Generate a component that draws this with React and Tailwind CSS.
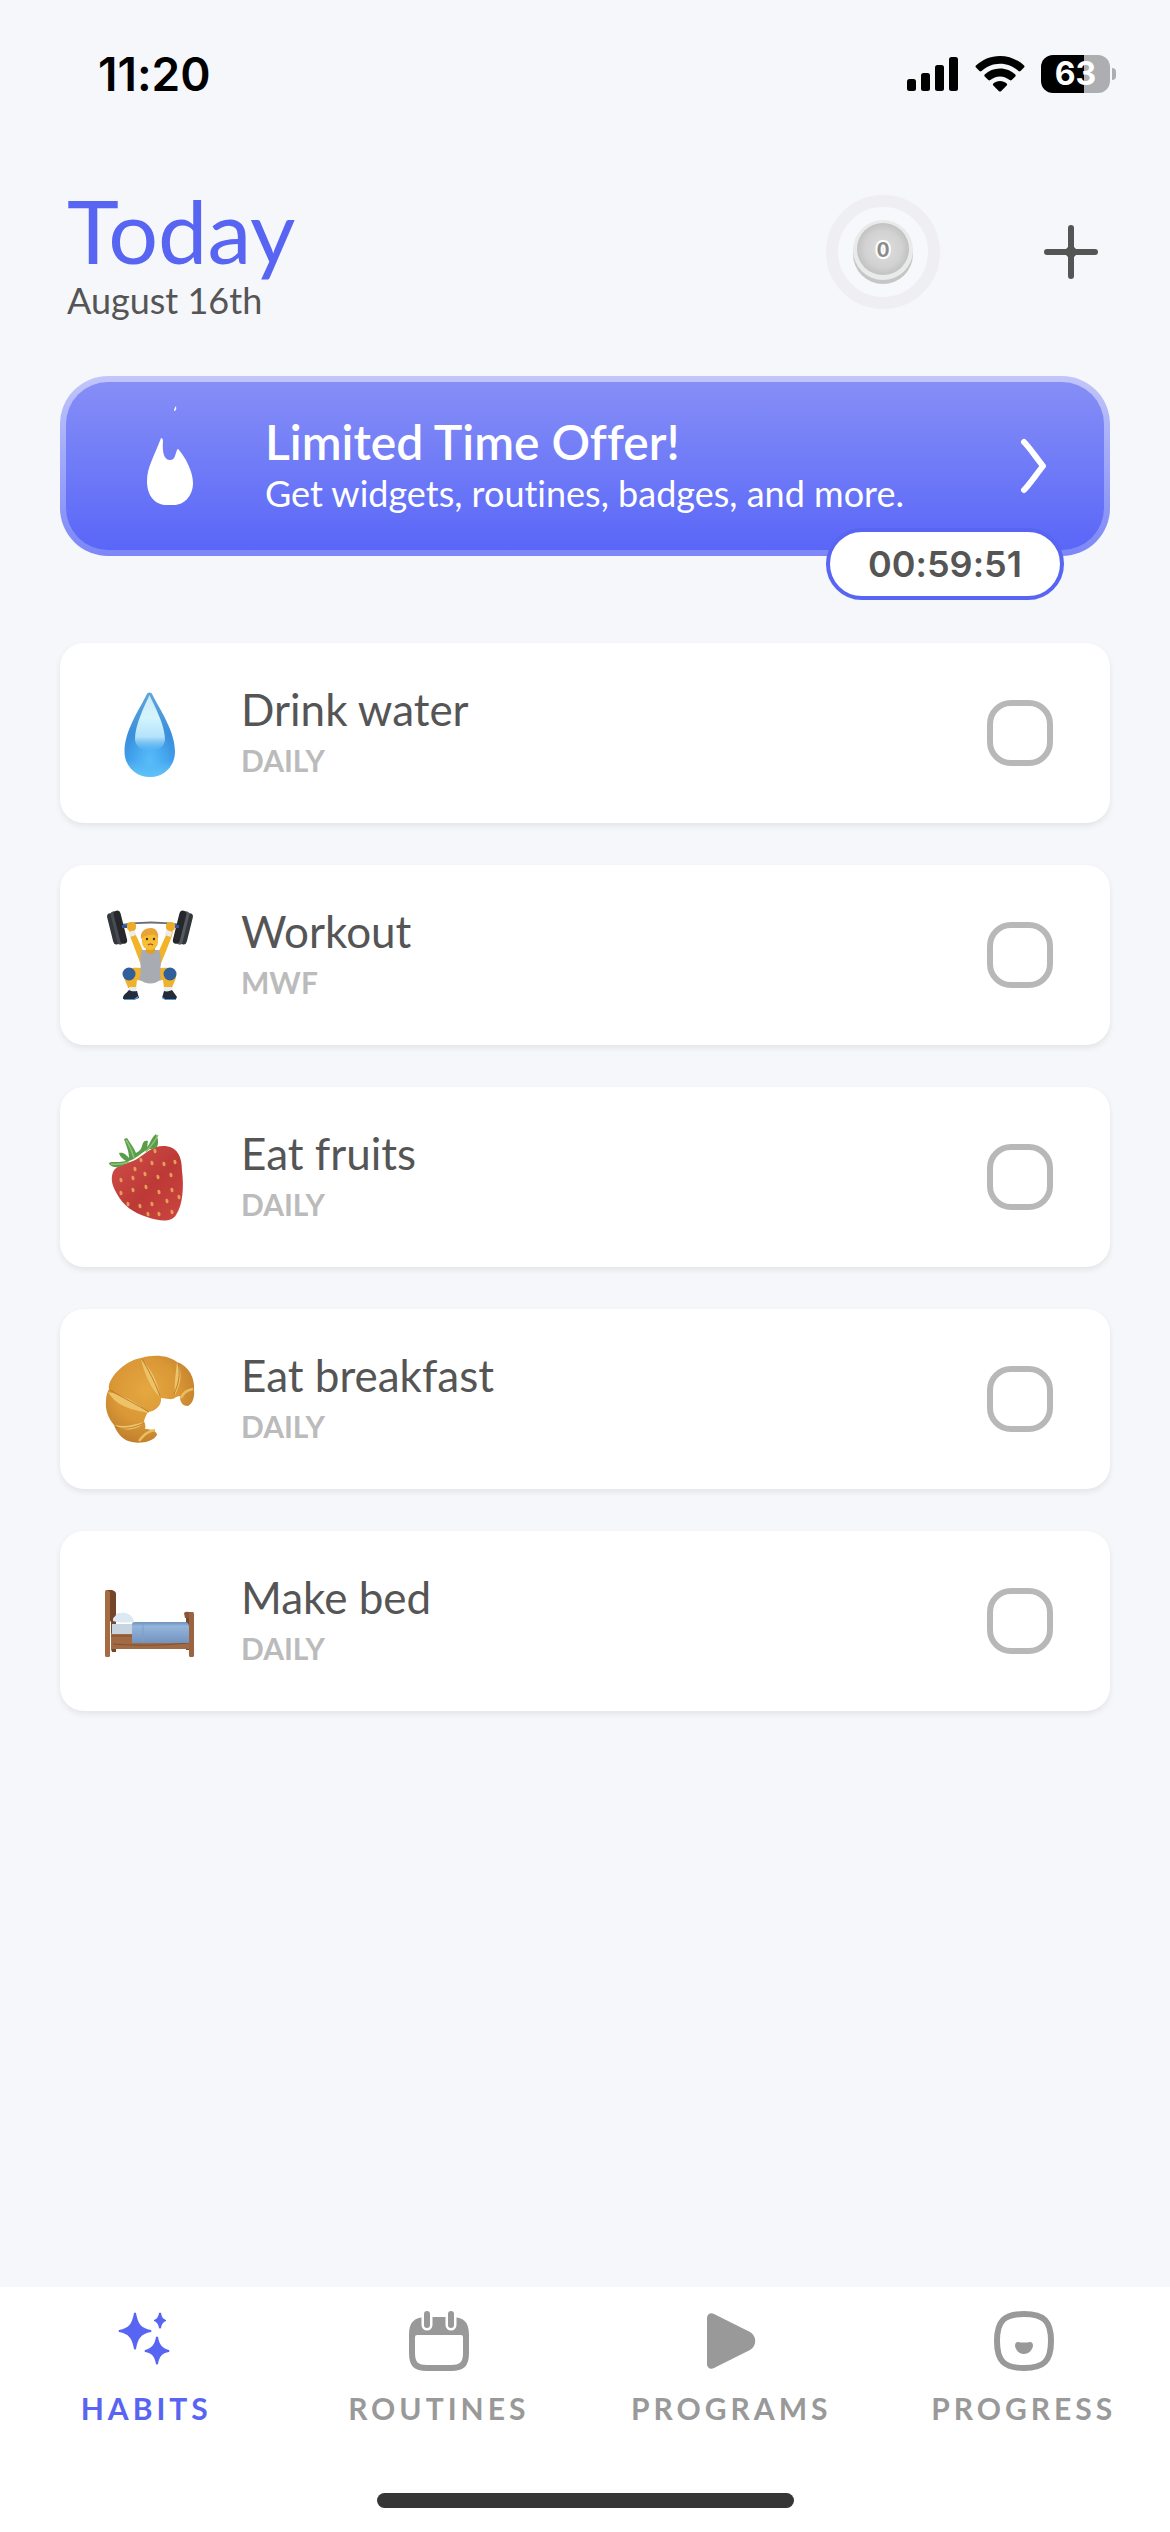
import React, { useState } from 'react';

const DropIcon = () => (
  <svg viewBox="0 3 140 120" className="w-[140px] h-[120px]" aria-hidden="true">
    <defs>
      <linearGradient id="dropBody" x1="0" y1="0" x2="0" y2="1">
        <stop offset="0" stopColor="#5fa6da" />
        <stop offset="0.5" stopColor="#3a8fda" />
        <stop offset="0.8" stopColor="#3f9dec" />
        <stop offset="1" stopColor="#6fc8f8" />
      </linearGradient>
      <linearGradient id="dropShine" x1="0" y1="0" x2="0" y2="1">
        <stop offset="0" stopColor="#cfeafa" />
        <stop offset="0.4" stopColor="#d3f5fd" />
        <stop offset="0.75" stopColor="#b4e2fb" />
        <stop offset="1" stopColor="#58b2f2" stopOpacity="0.3" />
      </linearGradient>
      <radialGradient id="dropGlow" cx="0.5" cy="0.8" r="0.45">
        <stop offset="0" stopColor="#55bdf8" />
        <stop offset="1" stopColor="#55bdf8" stopOpacity="0" />
      </radialGradient>
    </defs>
    <path d="M68.500 22.500c1.400 0 2.300.8 3 2.200C79 40 94 61 94 81.500 94 96.500 82.800 107 69 107S43.500 96.500 43.500 81.500C43.500 61 58 40 65.500 24.700c.7-1.400 1.600-2.200 3-2.200Z" fill="url(#dropBody)" />
    <path d="M68.500 22.500c1.400 0 2.300.8 3 2.200C79 40 94 61 94 81.500 94 96.500 82.800 107 69 107S43.500 96.500 43.500 81.500C43.500 61 58 40 65.500 24.700c.7-1.400 1.600-2.200 3-2.200Z" fill="url(#dropGlow)" />
    <path d="M68.500 25c5 11 15.500 30 15.500 44 0 7-6 12-15 12s-15-5-15-12c0-14 9.500-33 14.500-44Z" fill="url(#dropShine)" />
  </svg>
);

const WorkoutIcon = () => (
  <svg viewBox="0 0 120 130" className="w-[120px] h-[130px]" aria-hidden="true">
    <path d="M30 35Q60 30 90 35" fill="none" stroke="#6a6e74" strokeWidth="1.800" />
    {/* plates */}
    <g transform="rotate(-14 26 38)">
      <rect x="19" y="22" width="7" height="32" rx="3.500" fill="#33363b" />
      <rect x="23" y="21" width="6" height="34" rx="3" fill="#484c52" />
      <rect x="26" y="21" width="7" height="34" rx="3.500" fill="#25272b" />
    </g>
    <g transform="rotate(14 92 38)">
      <rect x="92" y="22" width="7" height="32" rx="3.500" fill="#33363b" />
      <rect x="89" y="21" width="6" height="34" rx="3" fill="#555a60" />
      <rect x="85" y="21" width="7" height="34" rx="3.500" fill="#25272b" />
    </g>
    <rect x="31" y="35" width="5" height="3" fill="#2c5aa8" />
    <rect x="84" y="35" width="4" height="3" fill="#2c5aa8" />
    {/* arms */}
    <path d="m38 40 6 3 9 20 5 6-8 6L39 46ZM82 40l-6 3-9 20-6 6 8 7 12-30Z" fill="#f2b329" />
    <path d="m38 42 6-2 1 5-6 2ZM75 40l6 2-1 5-6-2Z" fill="#e9edf2" />
    <rect x="36" y="32" width="9" height="9" rx="4" fill="#eeab28" />
    <rect x="75" y="32" width="9" height="9" rx="4" fill="#eeab28" />
    {/* legs */}
    <path d="M54 79c-8-2-19-2-21 5-1 5 3 9 4 14h8l1-8 12 2ZM65 79c8-2 18-2 20 5 1 5-3 9-4 14h-8l-1-8-12 2Z" fill="#f0b12d" />
    <circle cx="38" cy="84" r="6.500" fill="#315f9c" />
    <circle cx="79" cy="84" r="6.500" fill="#315f9c" />
    <path d="M38 97h8l-1 5h-7ZM73 97h8l-1 5h-7Z" fill="#e8edf3" />
    <path d="M38 100c3 2 6 1 8 1l2 7c-5 2-11 2-16 1 0-5 3-5 6-9ZM73 101c3 1 6 0 8-1l5 7-1 2c-5 1-10 1-14-1Z" fill="#252c37" />
    <path d="M33 109h10l4-3v2l-3 2H33ZM71 106l3 3h11v1H74l-3-2Z" fill="#4a9be0" />
    {/* singlet */}
    <path d="M51 60h4q4 5 9 0h4c4 8 0 19 2 29-6 6-15 6-22 0 4-10-1-21 3-29Z" fill="#a9abb2" />
    <path d="M55 56h9v6q-4 4-9 0Z" fill="#dfa024" />
    <rect x="51" y="40" width="16" height="20" rx="8" fill="#f7bd35" />
    <path d="M50 49c-1-7 3-11 10-11 5 0 8 4 7 11-2-3-3-5-7-4-4 0-7 1-10 4Z" fill="#e8a435" />
    <circle cx="56" cy="49" r="1.200" fill="#4b3312" />
    <circle cx="63" cy="49" r="1.200" fill="#4b3312" />
    <path d="M57 55q2-2 5 0" fill="none" stroke="#8d4f16" strokeWidth="1.200" />
  </svg>
);

const seeds = [
  [64, 31], [50, 40], [44, 49], [61, 43], [73, 44], [84, 42], [30, 60], [42, 58], [54, 54], [67, 57],
  [80, 55], [30, 73], [42, 70], [55, 67], [68, 72], [81, 70], [37, 84], [49, 86], [61, 84], [76, 81],
  [88, 77], [57, 94], [68, 94], [81, 92],
];

const StrawberryIcon = () => (
  <svg viewBox="0 -3 120 120" className="w-[120px] h-[120px]" aria-hidden="true">
    <defs>
      <linearGradient id="berry" x1="0" y1="0" x2="1" y2="1">
        <stop offset="0" stopColor="#d1504a" />
        <stop offset="0.55" stopColor="#bd3936" />
        <stop offset="1" stopColor="#cd4640" />
      </linearGradient>
    </defs>
    <path d="M22 52c4-8 15-8 24-13 9-6 16-13 26-13 14 0 19 10 19 25 2 15 1 34-6 44-5 8-17 6-29 2-14-4-24-12-30-23-4-7-7-14-4-22Z" fill="url(#berry)" />
    {seeds.map(([x, y]) => (
      <ellipse key={`${x}-${y}`} cx={x} cy={y} rx="1.500" ry="2.300" fill="#e0a05a" transform={`rotate(-15 ${x} ${y})`} />
    ))}
    <path d="m33 19 3-1c4 6 7 10 9 15 3-2 5-3 6-7 1-5 3-6 6-5-1 3 0 5-1 7 3-5 5-11 9-14 2 4 3 9 1 13-4 3-8 1-12 4-6 4-10 8-16 10-7 6-14 9-20 3 0-2 2-2 5-2 4 0 8 0 12-1-3-2-6-4-7-8 5-1 7 2 10 5 0-7-3-13-5-19Z" fill="#5a9c49" />
    <path d="M35 20c4 6 6 11 8 18M67 15c-4 8-8 12-12 17M20 44c7 1 12 0 18-2" fill="none" stroke="#8ac774" strokeWidth="1.500" />
  </svg>
);

const CroissantIcon = () => (
  <svg viewBox="0 0 120 120" className="w-[120px] h-[120px]" aria-hidden="true">
    <defs>
      <radialGradient id="crust" cx="0.45" cy="0.4" r="0.6">
        <stop offset="0" stopColor="#e5a840" />
        <stop offset="0.6" stopColor="#da9836" />
        <stop offset="1" stopColor="#c2802e" />
      </radialGradient>
    </defs>
    <path d="M18 50c-2-9 14-28 32-31 13-4 27-3 36 4 12 4 18 16 17 28 1 8-2 14-6 16-5 0-8-3-8-10-4 0-6 4-11 3-3 0-5-1-8-1 1 7-5 13-13 14-2 3-3 6-4 9 1 3 2 5 1 8 6 0 12 2 12 6-4 7-17 9-25 7-8-1-15-8-18-17-6-7-9-16-8-24 0-5 1-8 3-12Z" fill="url(#crust)" />
    <path d="M50 20c10 10 17 22 19 38-9-8-16-24-19-38ZM86 23c6 10 4 22-2 33-1-11 1-23 2-33ZM17 53c14 3 29 10 41 21-16-3-32-6-41-21ZM24 86c11 3 20-1 30-3-8 9-23 10-30 3Z" fill="#eec368" />
    <path d="M102 50c-7 1-10 4-12 9M64 91c-8 1-12 6-16 11" fill="none" stroke="#ebbd5e" strokeWidth="2.500" />
    <path d="M51 20c7 12 13 23 18 37M19 51c15 9 26 14 39 22M24 88c10 3 22 0 29-4M87 24c3 12 0 22-4 31" fill="none" stroke="#ae7023" strokeWidth="0.800" />
  </svg>
);

const BedIcon = () => (
  <svg viewBox="0 -4 120 110" className="w-[120px] h-[110px]" aria-hidden="true">
    <defs>
      <linearGradient id="quilt" x1="0" y1="0" x2="0" y2="1">
        <stop offset="0" stopColor="#6f91ba" />
        <stop offset="0.2" stopColor="#94b5dc" />
        <stop offset="1" stopColor="#7194bf" />
      </linearGradient>
    </defs>
    <path d="M20 21c3-1 5 1 5 3v54h-5ZM95 44c3-2 5-2 5 0v36h-5Z" fill="#744a30" />
    <path d="M20 63h78v16H20Z" fill="#a06a45" />
    <path d="M20 66h78M22 74q35 3 76-1" fill="none" stroke="#83512f" strokeWidth="1" />
    <path d="M21 54h22v10H21Z" fill="#c8d4df" />
    <path d="M22 46c6-5 18-5 21 5 0 2-14 2-21 0Z" fill="#dce8f3" />
    <path d="M41 54q0-2 3-2h51q3 1 3 5v16H41Z" fill="url(#quilt)" />
    <path d="M52 53v19" stroke="#7d9fc7" strokeWidth="1" />
    <rect x="14" y="20" width="5" height="67" rx="1.500" fill="#a56b43" />
    <path d="M16 20h5c3 1 4 3 4 5v20l-6 7V22ZM20 79h5v3h-4Z" fill="#744528" />
    <path d="M93 43q2-2 5-1h4v6h-8Z" fill="#8a5635" />
    <rect x="98" y="42" width="5" height="45" rx="1.500" fill="#9b6340" />
  </svg>
);

const FlameIcon = () => (
  <svg viewBox="0 0 60 120" className="w-[60px] h-[120px]" fill="currentColor" aria-hidden="true">
    <path d="M35 0q1 3-1 5h-1q0-3 2-5ZM20 32c1 0 2 1 2 3-1 11 1 19 7 19 5 0 5-5 7-10q1-2 2 0c6 7 14 21 14 33 0 13-9 22-19 22h-7C15 99 6 91 6 75c0-14 7-24 14-43Z" />
  </svg>
);

const HabitsIcon = () => (
  <svg viewBox="4 1 60 60" className="w-[60px] h-[60px]" fill="currentColor" aria-hidden="true">
    <path d="M22 3q1-1 2 0c2 11 5 15 15 17q1 1 0 2c-10 2-13 6-15 17q-1 1-2 0c-2-11-5-15-15-17q-1-1 0-2C17 18 20 14 22 3ZM44 27q1-1 2 0c1.500 8 4 11 11 13q1 1 0 2c-7 1-9.500 4-11 12q-1 1-2 0c-1.500-8-4-11-11-12q-1-1 0-2c7-2 9.500-5 11-13ZM47 3q1-1 2 0c.8 4 2 6 5 7v1c-3 1-4.200 3-5 7q-1 1-2 0c-.8-4-2-6-5-7v-1c3-1 4.200-3 5-7Z" />
  </svg>
);

const RoutinesIcon = () => (
  <svg viewBox="0 0 60 60" className="w-[60px] h-[60px]" aria-hidden="true">
    <path
      d="M18 6h24c13 0 18 5 18 18v18c0 13-5 18-18 18H18C5 60 0 55 0 42V24C0 11 5 6 18 6ZM8 24q-2 0-2 2v16c0 9 3 12 12 12h24c9 0 12-3 12-12V26q0-2-2-2Z"
      fill="currentColor"
      fillRule="evenodd"
    />
    <path d="M18 3v11M42 3v11" stroke="white" strokeWidth="11" strokeLinecap="round" />
    <path d="M18 3v11M42 3v11" stroke="currentColor" strokeWidth="6" strokeLinecap="round" />
  </svg>
);

const ProgramsIcon = () => (
  <svg viewBox="0 0 60 60" className="w-[60px] h-[60px]" fill="currentColor" aria-hidden="true">
    <path d="M6 7c0-4 4-6 7-4l36 18c7 4 7 14 0 18L13 57c-3 2-7 0-7-4Z" />
  </svg>
);

const ProgressIcon = () => (
  <svg viewBox="0 0 60 60" className="w-[60px] h-[60px]" aria-hidden="true">
    <path d="M30 3C50 3 57 10 57 30S50 57 30 57 3 50 3 30 10 3 30 3Z" fill="none" stroke="currentColor" strokeWidth="6" />
    <path d="M24 31q6 1 12 0 3 0 3 4c-1 5-5 8-9 8s-8-3-9-8q0-4 3-4Z" fill="currentColor" />
  </svg>
);

const habits = [
  { id: 'water', name: 'Drink water', schedule: 'Daily', icon: DropIcon },
  { id: 'workout', name: 'Workout', schedule: 'MWF', icon: WorkoutIcon },
  { id: 'fruits', name: 'Eat fruits', schedule: 'Daily', icon: StrawberryIcon },
  { id: 'breakfast', name: 'Eat breakfast', schedule: 'Daily', icon: CroissantIcon },
  { id: 'bed', name: 'Make bed', schedule: 'Daily', icon: BedIcon },
];

const tabs = [
  { label: 'Habits', icon: HabitsIcon },
  { label: 'Routines', icon: RoutinesIcon },
  { label: 'Programs', icon: ProgramsIcon },
  { label: 'Progress', icon: ProgressIcon },
];

const StatusBar = () => (
  <div className="flex items-center justify-between h-[148px] pl-[98px] pr-[54px] font-['Inter',sans-serif] text-black">
    <span className="text-[46px] font-semibold">11:20</span>
    <div className="flex items-center gap-4">
      <svg viewBox="0 0 52 36" className="w-[52px] h-9" aria-hidden="true">
        <rect x="0" y="23" width="9" height="12" rx="2.500" />
        <rect x="14" y="17" width="9" height="18" rx="2.500" />
        <rect x="28" y="9" width="9" height="26" rx="2.500" />
        <rect x="42" y="1" width="9" height="34" rx="2.500" />
      </svg>
      <svg viewBox="0 0 50 36" className="w-[50px] h-9" aria-hidden="true">
        <path d="M25 0C34.500 0 43 3.800 49 9.600q1 1 0 2l-3.500 3.500q-1 .8-2 0C38.500 10.500 32 7.800 25 7.800S11.500 10.500 6.500 15.100q-1 .8-2 0L1 11.600q-1-1 0-2C7 3.800 15.500 0 25 0Z" />
        <path d="M25 12.500c6 0 11.300 2.300 15.300 6q1 1 0 2l-3.600 3.600q-1 .8-2 0c-2.600-2.300-6-3.700-9.700-3.700s-7.100 1.400-9.700 3.700q-1 .8-2 0l-3.600-3.600q-1-1 0-2c4-3.700 9.300-6 15.300-6Z" />
        <path d="M25 25c2.600 0 5 .9 6.700 2.400q1 1 0 2l-5.700 5.800q-1 .8-2 0l-5.700-5.800q-1-1 0-2C20 25.900 22.400 25 25 25Z" />
      </svg>
      <div className="flex items-center gap-[2px]">
        <div className="flex items-center justify-center w-[69px] h-[38px] rounded-xl bg-[linear-gradient(to_right,#000_62%,#adaeb1_62%)] text-white text-[32px] leading-none font-bold">
          63
        </div>
        <div className="w-1 h-3 rounded-r-full bg-[#adaeb1]" />
      </div>
    </div>
  </div>
);

const Header = () => (
  <header className="flex items-start justify-between pl-[67px] pr-[60px]">
    <div className="pt-9">
      <h1 className="text-[88px] leading-[92px] text-[#5865f2]">Today</h1>
      <p className="text-[36px] leading-[48px] text-[#555]">August 16th</p>
    </div>
    <div className="flex items-center gap-[92px] pt-[47px]">
      <button type="button" aria-label="Streak: 0 days">
        <svg viewBox="0 0 114 114" className="w-[114px] h-[114px]" aria-hidden="true">
          <defs>
            <radialGradient id="coin" cx="0.5" cy="0.5" r="0.5">
              <stop offset="0" stopColor="#dedede" />
              <stop offset="0.7" stopColor="#d2d2d2" />
              <stop offset="1" stopColor="#c2c2c2" />
            </radialGradient>
          </defs>
          <circle cx="57" cy="57" r="51" fill="#f7f8fc" stroke="#eeeef3" strokeWidth="12" />
          <circle cx="57" cy="59" r="30" fill="#c6c6c6" />
          <circle cx="57" cy="55" r="30" fill="#e9eaea" />
          <circle cx="57" cy="54" r="26" fill="url(#coin)" />
          <text x="57" y="62" textAnchor="middle" fontSize="21" fontWeight="900" fill="#8b8b8b" stroke="#fff" strokeWidth="4" paintOrder="stroke">
            0
          </text>
        </svg>
      </button>
      <button type="button" aria-label="Add habit" className="text-[#555]">
        <svg viewBox="0 0 78 78" className="w-[78px] h-[78px]" aria-hidden="true">
          <path d="M39 15v48M15 39h48" stroke="currentColor" strokeWidth="6" strokeLinecap="round" />
          <path d="m39 31 8 8-8 8-8-8Z" fill="currentColor" />
        </svg>
      </button>
    </div>
  </header>
);

const OfferBanner = () => (
  <section className="relative mx-[60px] mt-[52px]">
    <a
      href="#offer"
      className="flex items-center h-[180px] p-[6px] rounded-[48px] bg-linear-to-b from-[#c2c6fa] to-[#7c86f7] text-white"
    >
      <div className="flex flex-1 items-center h-full rounded-[42px] bg-linear-to-b from-[#868ef6] to-[#5a66f7] pl-[75px] pr-[54px]">
        <FlameIcon />
        <div className="flex-1 pl-[64px]">
          <h2 className="text-[48px] leading-[54px] font-semibold">Limited Time Offer!</h2>
          <p className="text-[36px] leading-[48px]">Get widgets, routines, badges, and more.</p>
        </div>
        <svg viewBox="0 0 30 60" className="w-[30px] h-[60px]" aria-hidden="true">
          <path d="M4 6c6 6 11 14 19 24C15 40 10 48 4 54" fill="none" stroke="currentColor" strokeWidth="6" strokeLinecap="round" strokeLinejoin="round" />
        </svg>
      </div>
    </a>
    <time className="absolute right-[46px] -bottom-11 flex items-center justify-center w-[238px] h-[72px] rounded-full border-4 border-[#5865f2] bg-white font-['Inter',sans-serif] text-[36px] font-semibold text-[#555]">
      00:59:51
    </time>
  </section>
);

const HabitCard = ({ habit, checked, onToggle }) => {
  const Icon = habit.icon;

  return (
    <li>
      <label
        htmlFor={habit.id}
        className="flex items-center h-[180px] rounded-3xl bg-white pr-[57px] shadow-[0_3px_6px_rgba(0,0,0,0.08)]"
      >
        <span className="flex w-[181px] shrink-0 items-center justify-center">
          <Icon />
        </span>
        <span className="flex flex-1 flex-col">
          <span className="text-[44px] leading-[54px] text-[#555]">{habit.name}</span>
          <span className="text-[30px] leading-[48px] font-bold uppercase text-[#bbb]">{habit.schedule}</span>
        </span>
        <input
          id={habit.id}
          type="checkbox"
          checked={checked}
          onChange={onToggle}
          className="appearance-none w-[66px] h-[66px] rounded-3xl border-6 border-[#b8b8b8] checked:bg-[#5865f2] checked:border-[#5865f2]"
        />
      </label>
    </li>
  );
};

const App = () => {
  const [done, setDone] = useState([]);
  const [activeTab, setActiveTab] = useState('Habits');

  const toggleHabit = (id) => {
    setDone((prev) => (prev.includes(id) ? prev.filter((item) => item !== id) : [...prev, id]));
  };

  return (
    <div className="flex flex-col min-h-screen bg-[#f5f7fb] font-['Lato','Noto_Sans',sans-serif] [font-variant-ligatures:none]">
      <StatusBar />
      <Header />

      <main className="flex-1">
        <OfferBanner />
        <ul className="flex flex-col gap-[42px] px-[60px] pt-[87px]">
          {habits.map((habit) => (
            <HabitCard
              key={habit.id}
              habit={habit}
              checked={done.includes(habit.id)}
              onToggle={() => toggleHabit(habit.id)}
            />
          ))}
        </ul>
      </main>

      {/* Bottom tabs */}
      <footer className="flex flex-col items-center bg-white pb-6">
        <nav className="grid grid-cols-4 w-full pt-6">
          {tabs.map(({ label, icon: Icon }) => (
            <button
              key={label}
              type="button"
              onClick={() => setActiveTab(label)}
              className={`flex flex-col items-center gap-4 ${activeTab === label ? 'text-[#5865f2]' : 'text-[#999]'}`}
            >
              <Icon />
              <span className="text-[30px] leading-[42px] font-bold uppercase tracking-[4px]">{label}</span>
            </button>
          ))}
        </nav>
        <div className="mt-16 w-[417px] h-[15px] rounded-full bg-[#363636]" />
      </footer>
    </div>
  );
};

export default App;
